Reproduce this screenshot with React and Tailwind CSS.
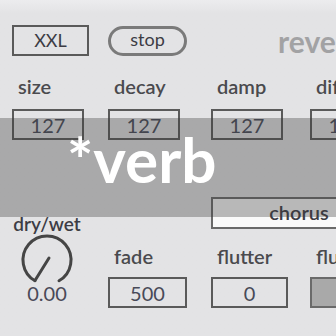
import React from "react";

const font = { fontFamily: "Lato, 'Noto Sans', sans-serif" };

function NumBox({ value, className = "" }) {
  return (
    <div
      className={`h-[31px] border-2 border-[#5a5a5a] flex items-center justify-center text-[20px] leading-none text-[#484a58] shrink-0 ${className}`}
    >
      {value}
    </div>
  );
}

function Label({ children }) {
  return (
    <div className="pl-[6px] text-[20px] leading-[24px] font-semibold text-[#4a4a4e] whitespace-nowrap">
      {children}
    </div>
  );
}

function Knob() {
  // arc opens at the bottom, pointer resting at the minimum
  return (
    <svg width="60" height="50" viewBox="0 0 60 50" className="block">
      <path
        d="M18 46.8 A24 24 0 1 1 42 46.8"
        fill="none"
        stroke="#454545"
        strokeWidth="3"
        strokeLinecap="round"
      />
      <line x1="32" y1="24" x2="18" y2="46.5" stroke="#454545" strokeWidth="3" strokeLinecap="round" />
    </svg>
  );
}

export default function App() {
  return (
    <div
      className="relative w-[336px] h-[336px] overflow-hidden bg-gradient-to-b from-[#ececee] from-0% to-[#e3e3e5] to-[4%]"
      style={font}
    >
      {/* top row */}
      <div className="flex items-center h-[31px] pl-[12px] mt-[25px] w-[500px] whitespace-nowrap">
        <div className="shrink-0 w-[77px] h-[31px] border-2 border-[#5a5a5a] flex items-center justify-center text-[18px] text-[#3c3c44]">
          XXL
        </div>
        <div className="shrink-0 ml-[19px] w-[79px] h-[30px] rounded-full border-[3px] border-[#7a7a7a] flex items-center justify-center text-[18px] text-[#3c3c44] pb-[2px]">
          stop
        </div>
        <div className="shrink-0 ml-[91px] text-[30px] font-bold text-[#a2a2a4] leading-none">
          reverb
        </div>
      </div>

      {/* size / decay / damp / diffusion */}
      <div className="flex pl-[12px] mt-[18px] w-[500px]">
        {[
          ["size", "w-[96px]"],
          ["decay", "w-[103px]"],
          ["damp", "w-[99px]"],
          ["diffusion", "w-[99px]"],
        ].map(([name, w]) => (
          <div key={name} className={`${w} shrink-0`}>
            <Label>{name}</Label>
            <NumBox value="127" className="w-[72px] mt-[11px]" />
          </div>
        ))}
      </div>

      {/* lower section */}
      <div className="flex pl-[12px] mt-[57px] w-[500px]">
        <div className="w-[70px] shrink-0 mt-[16px] flex flex-col items-center">
          <div className="text-[19px] leading-[22px] text-[#3c3c44] font-semibold">dry/wet</div>
          <div className="mt-[-1px]">
            <Knob />
          </div>
          <div className="mt-[-2px] text-[20px] leading-[22px] text-[#4a4a58]">0.00</div>
        </div>
        <div className="ml-[26px] shrink-0">
          <div className="ml-[103px] w-[176px] h-[32px] border-2 border-[#6a6a6a] bg-[#fafafa] flex items-center justify-center text-[20px] text-[#3c3c44] font-semibold pb-[2px]">
            chorus
          </div>
          <div className="flex mt-[15px]">
            <div className="w-[103px] shrink-0">
              <Label>fade</Label>
              <NumBox value="500" className="w-[79px] mt-[9px]" />
            </div>
            <div className="w-[99px] shrink-0">
              <Label>flutter</Label>
              <NumBox value="0" className="w-[77px] mt-[9px]" />
            </div>
            <div className="w-[99px] shrink-0">
              <Label>flux</Label>
              <div className="w-[77px] h-[31px] mt-[9px] border-2 border-[#6a6a6a] bg-[#a9a9a9]" />
            </div>
          </div>
        </div>
      </div>

      {/* title overlay */}
      <div className="absolute left-0 right-0 top-[118px] h-[99px] bg-[#3c3c3c]/[0.35] flex items-center">
        <div className="ml-[67px] text-[62px] font-bold text-white leading-none mt-[-18px]">*verb</div>
      </div>
    </div>
  );
}
